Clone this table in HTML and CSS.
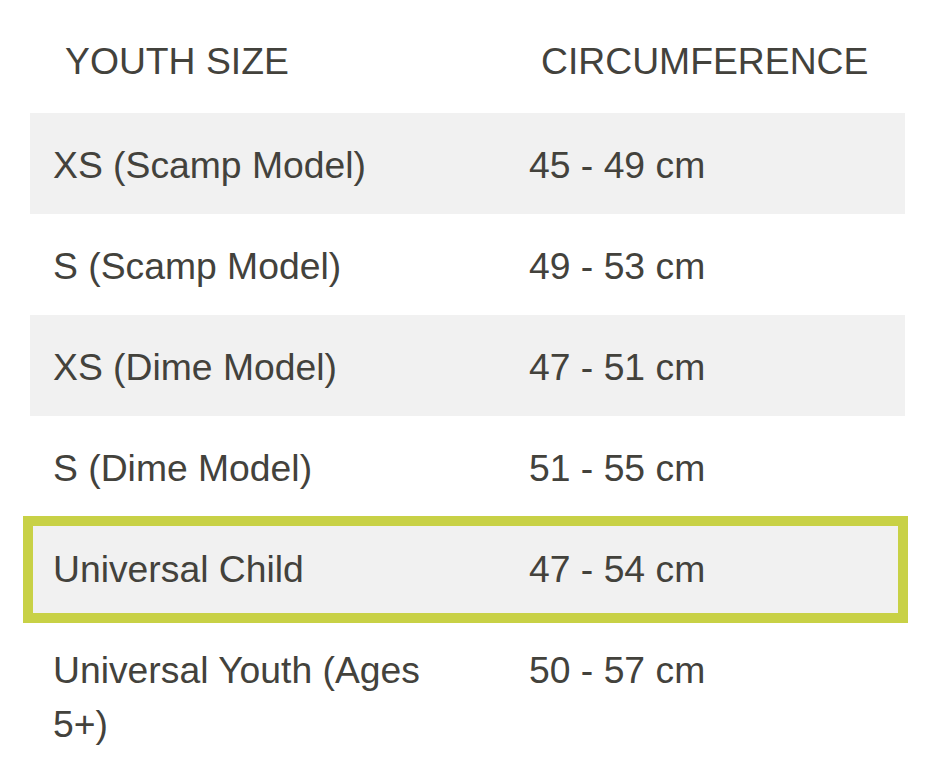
FILE: index.html
```html
<!DOCTYPE html>
<html>
<head>
<meta charset="utf-8">
<link rel="stylesheet" href="styles.css">
</head>
<body>
<div class="size-table">
  <div class="row head">
    <div class="cell">YOUTH SIZE</div>
    <div class="cell">CIRCUMFERENCE</div>
  </div>
  <div class="row shaded">
    <div class="cell">XS (Scamp Model)</div>
    <div class="cell">45 - 49 cm</div>
  </div>
  <div class="row">
    <div class="cell">S (Scamp Model)</div>
    <div class="cell">49 - 53 cm</div>
  </div>
  <div class="row shaded">
    <div class="cell">XS (Dime Model)</div>
    <div class="cell">47 - 51 cm</div>
  </div>
  <div class="row">
    <div class="cell">S (Dime Model)</div>
    <div class="cell">51 - 55 cm</div>
  </div>
  <div class="row shaded highlight">
    <div class="cell">Universal Child</div>
    <div class="cell">47 - 54 cm</div>
  </div>
  <div class="row">
    <div class="cell">Universal Youth (Ages 5+)</div>
    <div class="cell">50 - 57 cm</div>
  </div>
</div>
</body>
</html>
```
FILE: styles.css
```css
html, body {
  margin: 0;
  padding: 0;
  background: #ffffff;
}
body {
  font-family: "Liberation Sans", Arial, Helvetica, sans-serif;
  font-size: 37.3px;
  line-height: 54px;
  color: #43423c;
}
.size-table {
  width: 875px;
  margin-left: 30px;
}
.row {
  display: grid;
  grid-template-columns: 476px 1fr;
}
.row .cell {
  padding: 25px 30px 22px 23px;
}
.row.head .cell {
  padding: 34px 10px 25px 35px;
}
.shaded {
  background: #f1f1f1;
}
.highlight {
  position: relative;
}
.highlight::after {
  content: "";
  position: absolute;
  top: -1px;
  left: -7px;
  right: -3px;
  bottom: -5px;
  border: 10px solid #c8d146;
  pointer-events: none;
}
```
